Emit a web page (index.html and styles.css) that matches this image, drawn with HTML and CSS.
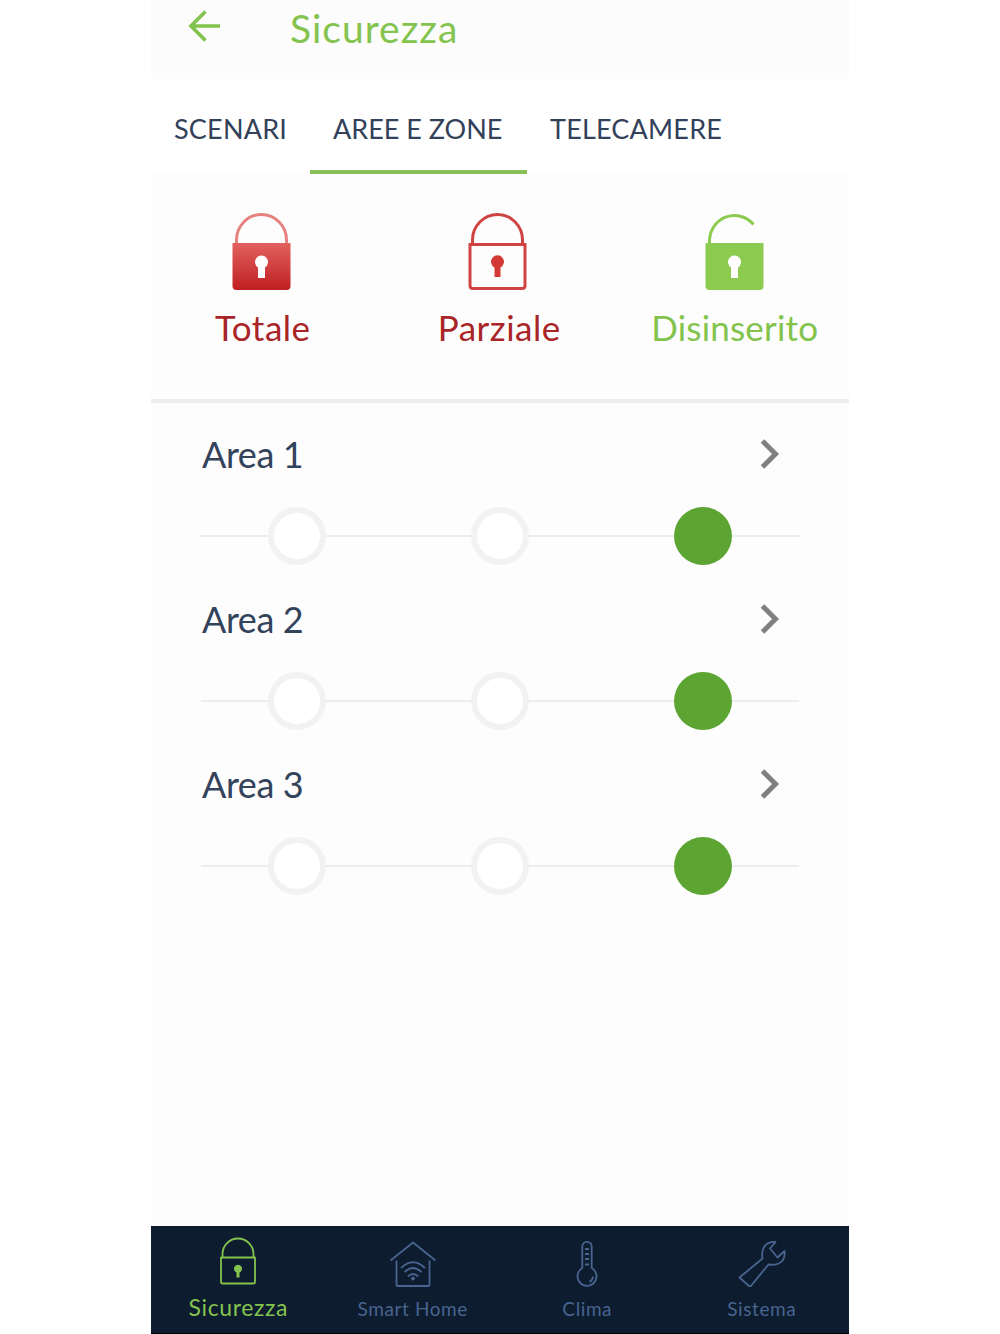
FILE: index.html
```html
<!DOCTYPE html>
<html lang="it">
<head>
<meta charset="utf-8">
<title>Sicurezza</title>
<link rel="stylesheet" href="styles.css">
</head>
<body>
<div class="app">
  <header class="header">
    <svg class="back" viewBox="0 0 32 32"><path d="M32 16H3M17.500 1.500L3 16l14.500 14.500"/></svg>
    <h1 class="title">Sicurezza</h1>
  </header>
  <nav class="tabs">
    <a class="tab tab-scenes">SCENARI</a>
    <a class="tab tab-areas active">AREE E ZONE</a>
    <a class="tab tab-cameras">TELECAMERE</a>
  </nav>
  <main class="content">
    <section class="modes">
      <div class="mode total">
        <svg class="lock" viewBox="0 0 59 77">
          <defs>
            <linearGradient id="body" x1="0" y1="0" x2="0" y2="1"><stop offset="0" stop-color="#e2625f"/><stop offset="1" stop-color="#bf1f21"/></linearGradient>
          </defs>
          <path d="M4.500 31V27a25 25.500 0 0 1 50 0V31" fill="none" stroke="#e5817f" stroke-width="3"/>
          <path d="M.5 30h58v43q0 4-4 4h-50q-4 0-4-4z" fill="url(#body)"/>
          <path d="M26 65V54.500a6.500 6.500 0 1 1 7 0V65z" fill="#fff"/>
        </svg>
        <span class="mode-name">Totale</span>
      </div>
      <div class="mode partial">
        <svg class="lock" viewBox="0 0 59 77">
          <path d="M4.500 31V27a25 25.500 0 0 1 50 0V31M2 31.500h55v41q0 3-3 3h-49q-3 0-3-3z" fill="none" stroke="#cf4442" stroke-width="3"/>
          <path d="M26.500 64V54.500a6.500 6.500 0 1 1 6 0V64z" fill="#d33a35"/>
        </svg>
        <span class="mode-name">Parziale</span>
      </div>
      <div class="mode off">
        <svg class="lock" viewBox="0 0 59 77">
          <path d="M4.500 31V27A25 25.500 0 0 1 48.500 11.500" fill="none" stroke="#8ccb50" stroke-width="3"/>
          <path d="M.5 30h58v43q0 4-4 4h-50q-4 0-4-4z" fill="#8ccb50"/>
          <path d="M26 65V54.500a6.500 6.500 0 1 1 7 0V65z" fill="#fff"/>
        </svg>
        <span class="mode-name">Disinserito</span>
      </div>
    </section>
    <section class="areas">
      <article class="area">
        <div class="area-head"><h2 class="area-name">Area 1</h2><svg class="chevron" viewBox="0 0 20 32"><path d="M2.500 3L15.500 16L2.500 29"/></svg></div>
        <div class="slider"><span class="stop"></span><span class="stop"></span><span class="stop on"></span></div>
      </article>
      <article class="area">
        <div class="area-head"><h2 class="area-name">Area 2</h2><svg class="chevron" viewBox="0 0 20 32"><path d="M2.500 3L15.500 16L2.500 29"/></svg></div>
        <div class="slider"><span class="stop"></span><span class="stop"></span><span class="stop on"></span></div>
      </article>
      <article class="area">
        <div class="area-head"><h2 class="area-name">Area 3</h2><svg class="chevron" viewBox="0 0 20 32"><path d="M2.500 3L15.500 16L2.500 29"/></svg></div>
        <div class="slider"><span class="stop"></span><span class="stop"></span><span class="stop on"></span></div>
      </article>
    </section>
  </main>
  <footer class="bottom">
    <a class="item current">
      <svg class="icon" viewBox="0 0 48 50"><path d="M8.500 20.500V17a15.500 15.500 0 0 1 31 0V20.500M7 20.500h34v24.500q0 1.500-1.500 1.500h-31q-1.500 0-1.500-1.500z"/><path class="solid" d="M22.500 40.500V35.500a4 4 0 1 1 3 0V40.500z"/></svg>
      <span class="label">Sicurezza</span>
    </a>
    <a class="item home">
      <svg class="icon" viewBox="0 0 48 50"><path d="M1.500 23.500L24 5.500L46.500 23.500M7.500 23.500V48q0 1 1 1h31q1 0 1-1V23.500"/><path d="M12 31q12-11.500 24 0M15.500 35.200q8.500-8.500 17 0M18.800 39.500q5.200-5 10.400 0"/><circle class="solid" cx="24" cy="41.500" r="1.900"/></svg>
      <span class="label">Smart Home</span>
    </a>
    <a class="item climate">
      <svg class="icon" viewBox="0 0 48 50"><path d="M19.300 31V9.500a4.700 4.700 0 0 1 9.400 0V31a9.500 9.500 0 1 1-9.400 0zM22 12h4M22 17h4M22 22h4M22 27.500h4M30 39.500q-.5 4-3.500 5.500"/></svg>
      <span class="label">Clima</span>
    </a>
    <a class="item system">
      <svg class="icon" viewBox="0 0 48 50"><path d="M1.500 40.500L24.500 21.500C22.500 11 28 4.500 37.500 5L32 11.500L39.500 20.500L46.500 14C47.500 23.500 42 29 30.500 27.500L12 50z"/></svg>
      <span class="label">Sistema</span>
    </a>
  </footer>
</div>
</body>
</html>
```
FILE: styles.css
```css
* { box-sizing: border-box; }
body { margin: 0; background: #fff; font-family: Lato, "Liberation Sans", sans-serif; }
h1, h2 { margin: 0; font-weight: 400; }
.app { width: 698px; height: 1334px; margin: 0 auto; display: flex; flex-direction: column; background: #fdfdfd; }
.header { height: 79px; display: flex; align-items: flex-start; padding-left: 37px; background: #fcfcfc; }
.back { width: 32px; height: 32px; margin-top: 10px; fill: none; stroke: #82c34c; stroke-width: 3.6; }
.title { margin-left: 70px; font-size: 39px; line-height: 56px; letter-spacing: 1px; color: #84c44e; }
.tabs { height: 95px; display: flex; background: #fff; }
.tab { height: 95px; padding-left: 23px; font-size: 27px; line-height: 100px; color: #33415a; white-space: nowrap; }
.tab-scenes { width: 159px; letter-spacing: .2px; }
.tab-areas { width: 217px; }
.tab-cameras { letter-spacing: .2px; }
.active { border-bottom: 4px solid #88bf57; }
.content { flex: 1; }
.modes { height: 229px; display: grid; grid-template-columns: repeat(3, 236.5px); margin: 0 -4px 0 -8px; padding-top: 39px; }
.areas { border-top: 4px solid #ededed; margin-top: -4px; }
.mode { display: flex; flex-direction: column; align-items: center; }
.lock { width: 59px; height: 77px; }
.mode-name { margin-top: 14px; padding-left: 3px; font-size: 35px; line-height: 46px; letter-spacing: .5px; color: #a92427; white-space: nowrap; }
.off .mode-name { padding-left: 1px; letter-spacing: .2px; color: #82c34c; }
.area { height: 165px; padding: 35px 50px 0; }
.area-head { height: 36px; display: flex; justify-content: space-between; padding: 0 19px 0 1px; }
.area-name { font-size: 36px; line-height: 33px; letter-spacing: -.4px; color: #33435b; }
.chevron { width: 20px; height: 32px; fill: none; stroke: #808080; stroke-width: 5; }
.slider { height: 58px; margin-top: 33px; padding: 0 67px; display: flex; justify-content: space-between; background: linear-gradient(#ededed, #ededed) 0 28px / 100% 2px no-repeat; }
.stop { width: 58px; height: 58px; border-radius: 50%; border: 6px solid #f2f2f2; background: #fff; }
.on { border: 0; background: #5ca532; }
.bottom { height: 108px; display: grid; grid-template-columns: repeat(4, 1fr); background: #0d1c2f; border-bottom: 1px solid #000; }
.item { display: flex; flex-direction: column; align-items: center; padding-top: 11px; color: #48648f; }
.icon { width: 48px; height: 50px; fill: none; stroke: currentColor; stroke-width: 1.8; stroke-linejoin: round; }
.icon .solid { fill: currentColor; stroke: none; }
.label { margin-top: 9px; font-size: 19px; line-height: 26px; letter-spacing: .6px; white-space: nowrap; }
.current { color: #84c44e; }
.current .label { margin-top: 7px; font-size: 23px; letter-spacing: .6px; }
```
